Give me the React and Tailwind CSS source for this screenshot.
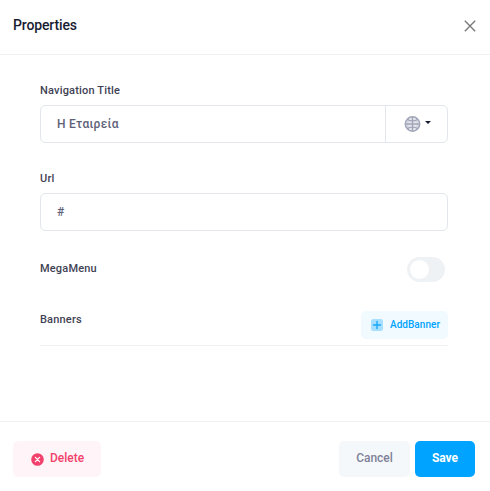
import React from 'react'

const CloseIcon = () => (
  <svg className="w-3 h-3" viewBox="0 0 12 12" fill="none" stroke="#7b7b7b" strokeWidth="1.4">
    <path d="M.8.8l10.4 10.4M11.2.8L.8 11.2" />
  </svg>
)

const GlobeIcon = () => (
  <svg className="w-[17px] h-4" viewBox="0 0 17 16" fill="none" stroke="#a1a5b7" strokeWidth="1.2">
    <circle cx="8.5" cy="8" r="7.2" fill="#e6e7ee" strokeWidth="1.5" />
    <path d="M8.5 1v14M1.5 8h14" strokeWidth="1.4" />
    <path d="M3.5 3.4c2.6 2 7.4 2 10 0M3.5 12.6c2.6-2 7.4-2 10 0" />
    <path d="M5 1.8c-1.8 4-1.8 8.4 0 12.4M12 1.8c1.8 4 1.8 8.4 0 12.4" strokeWidth="0.4" />
  </svg>
)

const PlusIcon = () => (
  <svg className="w-3 h-3" viewBox="0 0 12 12">
    <rect width="12" height="12" rx="2.5" fill="#a6dfff" />
    <path d="M6 2.5v7M2.5 6h7" stroke="#1aa7f8" strokeWidth="1.4" strokeLinecap="round" />
  </svg>
)

const DeleteIcon = () => (
  <svg className="w-[13px] h-[13px]" viewBox="0 0 13 13">
    <circle cx="6.5" cy="6.5" r="6.3" fill="#f1416c" />
    <path d="M4.4 4.4l4.2 4.2M8.6 4.4L4.4 8.6" stroke="#fff" strokeWidth="1.3" strokeLinecap="round" />
  </svg>
)

const Label = ({ children }) => (
  <span className="block text-[11px] leading-4 font-medium tracking-[0.18px] text-[#3f4254]">{children}</span>
)

const Header = () => (
  <div className="h-[55px] shrink-0 flex items-center justify-between pl-[13px] pr-[14px] pb-1 border-b border-[#eff2f5]">
    <h2 className="text-sm font-medium tracking-[-0.13px] text-[#181c32]">Properties</h2>
    <button type="button" aria-label="Close" className="pt-px">
      <CloseIcon />
    </button>
  </div>
)

const Footer = () => (
  <div className="h-[70px] shrink-0 flex items-start justify-between pl-[13px] pr-[15px] pt-[19px] border-t border-[#eff2f5] text-xs font-medium">
    <button type="button" className="w-[88px] h-9 flex items-center pl-[18px] gap-1.5 rounded-[5px] bg-[#fff5f8] text-[#f1416c]">
      <DeleteIcon />
      <span className="pb-0.5">Delete</span>
    </button>
    <div className="flex gap-[5px]">
      <button type="button" className="w-[71px] h-9 pb-0.5 rounded-[5px] bg-[#f5f8fa] text-[#7e8299]">Cancel</button>
      <button type="button" className="w-[60px] h-9 pb-0.5 rounded-[5px] bg-[#00a3ff] text-white font-bold">Save</button>
    </div>
  </div>
)

const App = () => {
  return (
    <div className="w-[490px] h-[491px] flex flex-col bg-white font-['Roboto','Noto_Sans',sans-serif]">
      <Header />
      <div className="flex-1 pl-10 pr-[42px] pt-7">
        <Label>Navigation Title</Label>
        <div className="mt-1.5 h-[38px] flex rounded-[5px] border border-[#e4e6ef]">
          <div className="flex-1 flex items-center pl-4 text-xs font-medium tracking-[0.25px] text-[#5e6278]">Η Εταιρεία</div>
          <button type="button" className="w-[62px] flex items-center pl-[18px] gap-1 border-l border-[#e4e6ef]">
            <GlobeIcon />
            <span className="mb-[3px] border-x-[3px] border-t-[3px] border-x-transparent border-t-[#181c32]" />
          </button>
        </div>

        <div className="mt-7">
          <Label>Url</Label>
        </div>
        <div className="mt-1.5 h-[38px] flex items-center pl-4 rounded-[5px] border border-[#e4e6ef] text-xs font-medium text-[#5e6278]">
          #
        </div>

        <div className="mt-[26px] h-[25px] flex items-center justify-between pr-[3px]">
          <div className="pb-0.5">
            <Label>MegaMenu</Label>
          </div>
          <div className="w-[38px] h-[25px] flex items-center pl-[3px] rounded-full bg-[#eff2f5]">
            <span className="w-[19px] h-[19px] rounded-full bg-white" />
          </div>
        </div>

        <div className="mt-[29px] h-[35px] flex items-start justify-between border-b border-[#eff2f5]">
          <div className="pt-px">
            <Label>Banners</Label>
          </div>
          <button type="button" className="w-[87px] h-7 flex items-center pl-2.5 gap-[7px] rounded-[5px] bg-[#f1faff] text-[10px] font-medium tracking-[0.04px] text-[#00a3ff]">
            <PlusIcon />
            <span className="pb-px">AddBanner</span>
          </button>
        </div>
      </div>
      <Footer />
    </div>
  )
}

export default App
